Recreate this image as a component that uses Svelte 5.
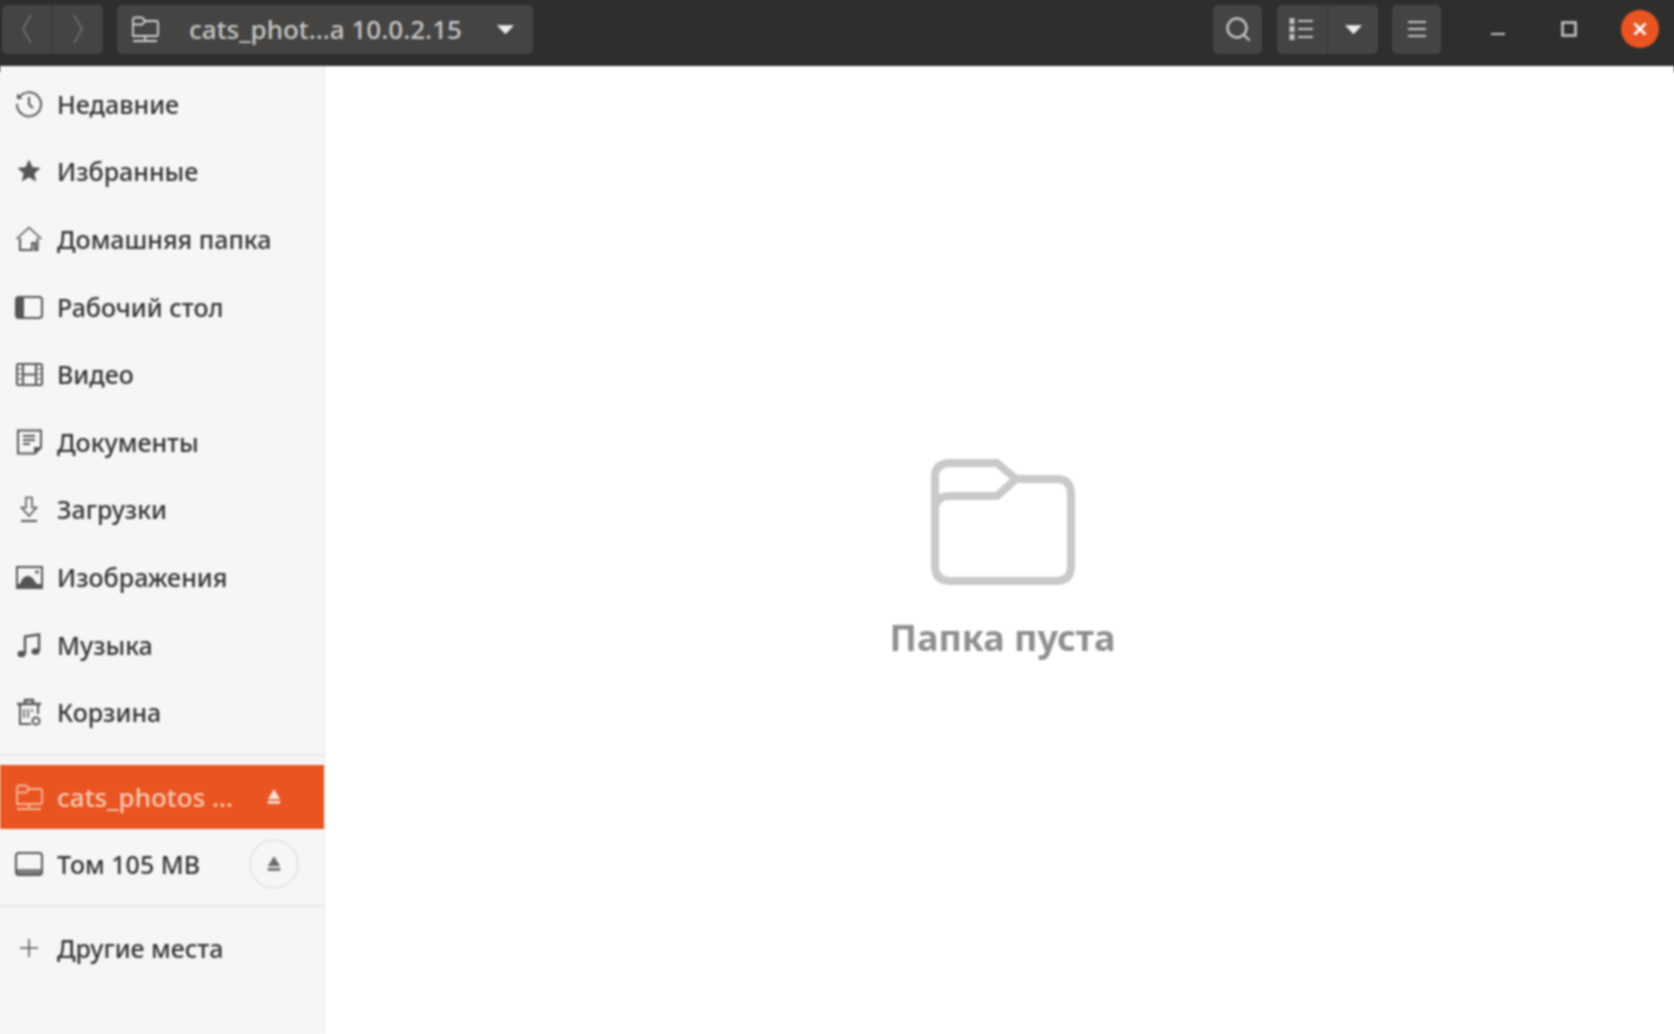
<script>
  const places = [
    { label: 'Недавние', icon: 'recent' },
    { label: 'Избранные', icon: 'star' },
    { label: 'Домашняя папка', icon: 'home' },
    { label: 'Рабочий стол', icon: 'desktop' },
    { label: 'Видео', icon: 'video' },
    { label: 'Документы', icon: 'docs' },
    { label: 'Загрузки', icon: 'down' },
    { label: 'Изображения', icon: 'image' },
    { label: 'Музыка', icon: 'music' },
    { label: 'Корзина', icon: 'trash' }
  ];
</script>

{#snippet icon(name)}
  <svg class="ico" viewBox="0 0 30 30" fill="none" stroke="currentColor" stroke-width="2">
    {#if name === 'recent'}
      <path d="M4.500 9.500A12 12 0 1 1 3 15" /><path d="M3 4.500v5.500h5.500" fill="currentColor" stroke="none" /><path d="M15 8v7.500l4 3.500" />
    {:else if name === 'star'}
      <path d="M15 3.500l3.400 7.600 8.100.8-6.100 5.500 1.800 8.100-7.200-4.200-7.200 4.200 1.800-8.100-6.100-5.500 8.100-.8z" fill="currentColor" stroke="none" />
    {:else if name === 'home'}
      <path d="M2.500 15L15 3.500 27.500 15" stroke-width="1.600" /><path d="M6 14v12h12v-7h3v7h2.500V14" />
    {:else if name === 'desktop'}
      <rect x="2" y="5" width="26" height="21" rx="3" /><path d="M3 6h7v19H3z" fill="currentColor" stroke="none" />
    {:else if name === 'video'}
      <rect x="3" y="5" width="25" height="21" rx="1.500" /><path d="M9 5v21M22 5v21M9 15.500h13" /><path d="M3 10h6M3 15h6M3 20h6M22 10h6M22 15h6M22 20h6" stroke-width="1.200" />
    {:else if name === 'docs'}
      <path d="M4 3.500h23v17l-6 6H4z" /><path d="M20 26v-6h7" fill="currentColor" stroke="none" /><path d="M9 9h12M9 13h12M9 17h7" />
    {:else if name === 'down'}
      <path d="M12 3.500h6v10h4.500L15 22l-7.500-8.500H12z" stroke-width="1.600" /><path d="M7 27h16" />
    {:else if name === 'image'}
      <path d="M3 5h25v21H3z" /><path d="M3 22h25v4H3z" fill="currentColor" stroke="none" /><path d="M6 22c2-6 5-8 8-8 4 0 6 4 9 8z" fill="currentColor" stroke="none" /><circle cx="23" cy="10" r="1.800" fill="currentColor" stroke="none" />
    {:else if name === 'music'}
      <path d="M11 24V6.500l14-2V21" stroke-width="2.400" /><ellipse cx="7.500" cy="24" rx="4" ry="3.200" fill="currentColor" stroke="none" /><ellipse cx="21.500" cy="21.500" rx="4" ry="3.200" fill="currentColor" stroke="none" />
    {:else if name === 'trash'}
      <path d="M6 8v19h11M24 8v9" /><path d="M3 7h24M11 6V3h8v3" stroke-width="2.400" /><path d="M10 12v9M14 12v9M18 12v3" stroke-width="1.500" /><circle cx="22" cy="24" r="3.500" />
    {:else if name === 'net'}
      <path d="M3 22V5.500A2 2 0 0 1 5 3.500h7l3.500 3.500H26a2 2 0 0 1 2 2V20a2 2 0 0 1-2 2H5z" stroke-width="1.800" /><path d="M3 10.500h9l3.500-3.500" stroke-width="1.800" /><path d="M15 22v4M3 27h24" stroke-width="1.800" />
    {:else if name === 'drive'}
      <rect x="2" y="4" width="26" height="22" rx="3" /><path d="M2 20h26v3a3 3 0 0 1-3 3H5a3 3 0 0 1-3-3z" fill="currentColor" stroke="none" opacity=".75" />
    {:else if name === 'plus'}
      <path d="M15 6v18M6 15h18" stroke-width="1.600" />
    {/if}
  </svg>
{/snippet}

{#snippet eject()}
  <svg class="eject" viewBox="0 0 16 16" fill="currentColor"><path d="M8 1l5.500 9h-11zM2.500 11.500h11V14h-11z" /></svg>
{/snippet}

{#snippet caret()}
  <svg class="caret" viewBox="0 0 16 10" fill="currentColor"><path d="M0 1h16L8 9.500z" /></svg>
{/snippet}

<div class="window">
  <header class="bar">
    <div class="group nav">
      <button class="btn wnav" aria-label="Назад">
        <svg width="14" height="34" viewBox="0 0 14 34" fill="none" stroke="#6a6968" stroke-width="2"><path d="M11 3L3 17l8 14" /></svg>
      </button>
      <button class="btn wnav" aria-label="Вперёд">
        <svg width="14" height="34" viewBox="0 0 14 34" fill="none" stroke="#6a6968" stroke-width="2"><path d="M3 3l8 14-8 14" /></svg>
      </button>
    </div>
    <button class="btn path">
      <span class="pathicon">{@render icon('net')}</span>
      <span class="pathtext">cats_phot…a 10.0.2.15</span>
      {@render caret()}
    </button>
    <span class="spacer"></span>
    <button class="btn w49" aria-label="Поиск">
      <svg width="30" height="30" viewBox="0 0 30 30" fill="none" stroke="#c5c4c2" stroke-width="2.400"><circle cx="14" cy="14" r="9.500" /><path d="M21 21l5.500 5.500" /></svg>
    </button>
    <div class="group view">
      <button class="btn w51" aria-label="Вид">
        <svg width="26" height="26" viewBox="0 0 26 26" fill="none" stroke="#c5c4c2" stroke-width="2"><path d="M9 5h15M9 13h15M9 21h15" /><path d="M3 2v22" stroke-width="5" stroke-dasharray="6 2" /></svg>
      </button>
      <button class="btn w50" aria-label="Режим">{@render caret()}</button>
    </div>
    <button class="btn w49 menu" aria-label="Меню">
      <svg width="22" height="22" viewBox="0 0 22 22" fill="none" stroke="#c5c4c2" stroke-width="2"><path d="M2 4h18M2 11h18M2 18h18" /></svg>
    </button>
    <div class="winbtns">
      <button class="wb" aria-label="Свернуть"><svg width="18" height="18" viewBox="0 0 18 18" fill="none" stroke="#c5c4c2" stroke-width="2"><path d="M2 14h14" /></svg></button>
      <button class="wb" aria-label="Развернуть"><svg width="18" height="18" viewBox="0 0 18 18" fill="none" stroke="#c5c4c2" stroke-width="2.600"><rect x="2.500" y="2.500" width="13" height="13" /></svg></button>
      <button class="wb close" aria-label="Закрыть"><svg width="18" height="18" viewBox="0 0 18 18" fill="none" stroke="#fff" stroke-width="2.600"><path d="M3.500 3.500l11 11M14.500 3.500l-11 11" /></svg></button>
    </div>
  </header>

  <div class="body">
    <aside class="side">
      <ul class="list">
        {#each places as p}
          <li class="row">{@render icon(p.icon)}<span>{p.label}</span></li>
        {/each}
      </ul>
      <hr />
      <ul class="vols">
        <li class="row sel">{@render icon('net')}<span class="grow">cats_photos …</span>{@render eject()}</li>
        <li class="row vol">{@render icon('drive')}<span class="grow">Том 105 MB</span><span class="ring">{@render eject()}</span></li>
      </ul>
      <hr class="second" />
      <div class="row other">{@render icon('plus')}<span>Другие места</span></div>
    </aside>

    <main class="main">
      <div class="empty">
        <svg width="144" height="126" viewBox="0 2 144 126" fill="none" stroke="#c9c9c9" stroke-width="8" stroke-linejoin="round">
          <path d="M4 52V20Q4 6 20 6h46l19 16h40q15 0 15 15v72q0 15-15 15H20q-16 0-16-15z" />
          <path d="M4 52q0-13 16-13h46l19-17" />
        </svg>
        <p>Папка пуста</p>
      </div>
    </main>
  </div>
</div>

<style>
  :global(html) {
    overflow: hidden;
  }
  :global(body) {
    margin: 0;
    background: #fff;
  }
  .window {
    width: 1674px;
    height: 1034px;
    display: flex;
    flex-direction: column;
    font-family: "Noto Sans", "Open Sans", sans-serif;
    filter: blur(0.8px);
  }
  button {
    font: inherit;
    border: 0;
    padding: 0;
    color: inherit;
    display: flex;
    align-items: center;
    justify-content: center;
  }
  .bar {
    flex: 0 0 66px;
    box-sizing: border-box;
    background: #2f2e2d;
    box-shadow: 0 0 0 6px #2f2e2d;
    display: flex;
    align-items: center;
    padding: 0 0 8px 2px;
    color: #d5d4d2;
  }
  .btn {
    height: 49px;
    background: #454443;
    border-radius: 5px;
  }
  .group {
    display: flex;
  }
  .group .btn:first-child {
    border-radius: 5px 0 0 5px;
    border-right: 1px solid #343332;
  }
  .group .btn:last-child {
    border-radius: 0 5px 5px 0;
  }
  .wnav {
    width: 50.500px;
  }
  .w49 {
    width: 49px;
  }
  .w51 {
    width: 51px;
  }
  .w50 {
    width: 50px;
  }
  .path {
    width: 416px;
    margin-left: 14px;
    justify-content: flex-start;
    font-size: 26px;
    font-weight: 500;
  }
  .pathicon {
    display: flex;
    margin-left: 13px;
  }
  .pathicon .ico {
    color: #d5d4d2;
  }
  .pathtext {
    margin-left: 16px;
    width: 308px;
    text-align: left;
    white-space: nowrap;
    color: #c8c7c5;
  }
  .caret {
    width: 17px;
    height: 11px;
    color: #f0efee;
  }
  .spacer {
    flex: 1;
  }
  .view {
    margin-left: 15px;
  }
  .menu {
    margin-left: 14px;
  }
  .winbtns {
    display: flex;
    gap: 33px;
    margin-left: 38px;
    padding-right: 15px;
  }
  .wb {
    width: 38px;
    height: 38px;
    background: transparent;
    border-radius: 50%;
  }
  .close {
    background: #e95420;
  }
  .body {
    flex: 1;
    display: flex;
    min-height: 0;
  }
  .side {
    width: 325px;
    box-sizing: border-box;
    background: #f6f6f6;
    box-shadow: -6px 6px 0 #f6f6f6;
    border-right: 1px solid #e6e6e6;
    padding-top: 4px;
    color: #333;
    font-size: 25px;
    font-weight: 500;
  }
  .list,
  .vols {
    list-style: none;
    margin: 0;
    padding: 0;
  }
  .row {
    height: 67.600px;
    box-sizing: border-box;
    padding-left: 14px;
    display: flex;
    align-items: center;
    white-space: nowrap;
  }
  .ico {
    width: 30px;
    height: 30px;
    flex: none;
    margin-right: 13px;
    color: #555;
  }
  .grow {
    flex: 1;
  }
  hr {
    margin: 8px 0 9px;
    border: 0;
    height: 2px;
    background: #e8e8e8;
  }
  hr.second {
    margin: 6px 0 11px;
  }
  .sel {
    height: 64px;
    background: #e95420;
    color: #f9c9b4;
    font-size: 26px;
  }
  .sel .ico {
    color: #f7b79c;
  }
  .sel .eject {
    color: #fbe3d8;
    margin-right: 41px;
  }
  .eject {
    width: 18px;
    height: 18px;
  }
  .vol {
    height: 70px;
    padding-right: 25px;
  }
  .ring {
    width: 50px;
    height: 50px;
    border: 2px solid #e6e6e6;
    box-sizing: border-box;
    border-radius: 50%;
    display: flex;
    align-items: center;
    justify-content: center;
    color: #6a6a6a;
  }
  .other {
    height: 60px;
  }
  .main {
    flex: 1;
    display: flex;
    align-items: center;
    justify-content: center;
    padding: 18px 0 0 6px;
    min-width: 0;
    background: #fff;
    box-shadow: 6px 6px 0 #fff;
  }
  .empty {
    display: flex;
    flex-direction: column;
    align-items: center;
  }
  .empty p {
    margin: 32px 0 0;
    font-size: 36px;
    font-weight: 700;
    line-height: 42px;
    color: #8f8f8f;
  }
</style>
